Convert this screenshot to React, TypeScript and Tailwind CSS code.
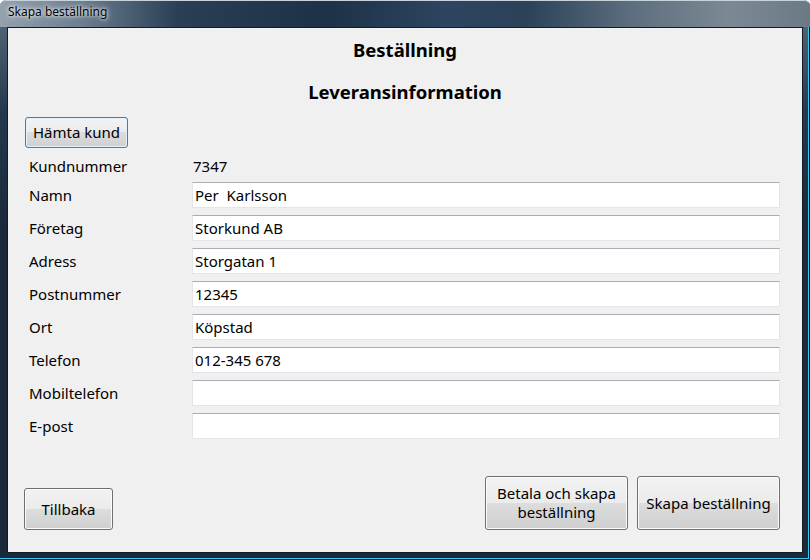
const FONT = { fontFamily: '"Noto Sans", "Liberation Sans", sans-serif' };

const btn =
  'border border-[#707070] rounded-[3px] bg-[linear-gradient(180deg,#f2f2f2_0%,#ebebeb_50%,#dddddd_50%,#cfcfcf_100%)] shadow-[inset_0_0_0_1px_#fbfbfb] text-black text-[15px] leading-[19px] flex items-center justify-center text-center';

const fields: { label: string; value: string }[] = [
  { label: 'Namn', value: 'Per  Karlsson' },
  { label: 'Företag', value: 'Storkund AB' },
  { label: 'Adress', value: 'Storgatan 1' },
  { label: 'Postnummer', value: '12345' },
  { label: 'Ort', value: 'Köpstad' },
  { label: 'Telefon', value: '012-345 678' },
  { label: 'Mobiltelefon', value: '' },
  { label: 'E-post', value: '' },
];

export default function App() {
  return (
    <div
      className="w-[810px] h-[560px] flex flex-col bg-[linear-gradient(180deg,#5d6f80_0%,#24384d_20%,#1a2a3b_40%,#1a2a3b_100%)] rounded-t-[6px] shadow-[inset_-1px_-1px_0_#0d1a26,inset_-2px_-2px_0_#3cc8ee]"
      style={FONT}
    >
      <div className="h-[27px] shrink-0 rounded-t-[6px] bg-[linear-gradient(90deg,#94a2ae_0%,#6c7e8f_10%,#2a3f55_22%,#1d3147_40%,#2d4560_55%,#2b4259_65%,#5d6e7e_78%,#7c8995_90%,#6b7986_100%)] border-t border-[#c8d2da] flex items-start px-[8px] pt-[3px]">
        <span className="text-[12px] text-black leading-[16px] [text-shadow:0_0_6px_#ffffff,0_0_3px_#ffffff]">
          Skapa beställning
        </span>
      </div>
      <div className="flex-1 mx-[7px] mb-[7px] border border-[#101c28] bg-[#f0f0f0] flex flex-col">
        <div className="mt-[11px] h-[22px] text-center font-bold text-[18.5px] leading-[22px] text-black">Beställning</div>
        <div className="mt-[20px] h-[22px] text-center font-bold text-[18.5px] leading-[22px] text-black">Leveransinformation</div>
        <div className="mt-[14px] pl-[17px]">
          <button className="w-[103px] h-[31px] border border-[#3c7fb1] rounded-[3px] bg-[linear-gradient(180deg,#f3f3f3_0%,#ebebeb_50%,#dcdcdc_50%,#d0d0d0_100%)] shadow-[inset_0_0_0_1px_#e4f1fa] text-black text-[15px] flex items-center justify-center">
            Hämta kund
          </button>
        </div>
        <div className="mt-[5px] pl-[21px] grid grid-cols-[163px_588px] h-[26px] items-center text-[15px] text-black">
          <span>Kundnummer</span>
          <span className="pl-[1px]">7347</span>
        </div>
        <div className="mt-[3px] pl-[21px] grid grid-cols-[163px_588px] gap-y-[7px] text-[15px] text-black">
          {fields.map((f) => (
            <div key={f.label} className="contents">
              <span className="h-[26px] flex items-center">{f.label}</span>
              <div className="h-[26px] bg-white border border-[#e2e6eb] border-t-[#abadb3] flex items-center pl-[2px] whitespace-pre">
                {f.value}
              </div>
            </div>
          ))}
        </div>
        <div className="flex-1" />
        <div className="flex items-end pl-[16px] pr-[22px] pb-[22px]">
          <button className={`${btn} w-[89px] h-[42px]`}>Tillbaka</button>
          <div className="flex-1" />
          <button className={`${btn} w-[143px] h-[54px]`}>
            Betala och skapa
            <br />
            beställning
          </button>
          <button className={`${btn} w-[143px] h-[54px] ml-[9px]`}>Skapa beställning</button>
        </div>
      </div>
    </div>
  );
}
